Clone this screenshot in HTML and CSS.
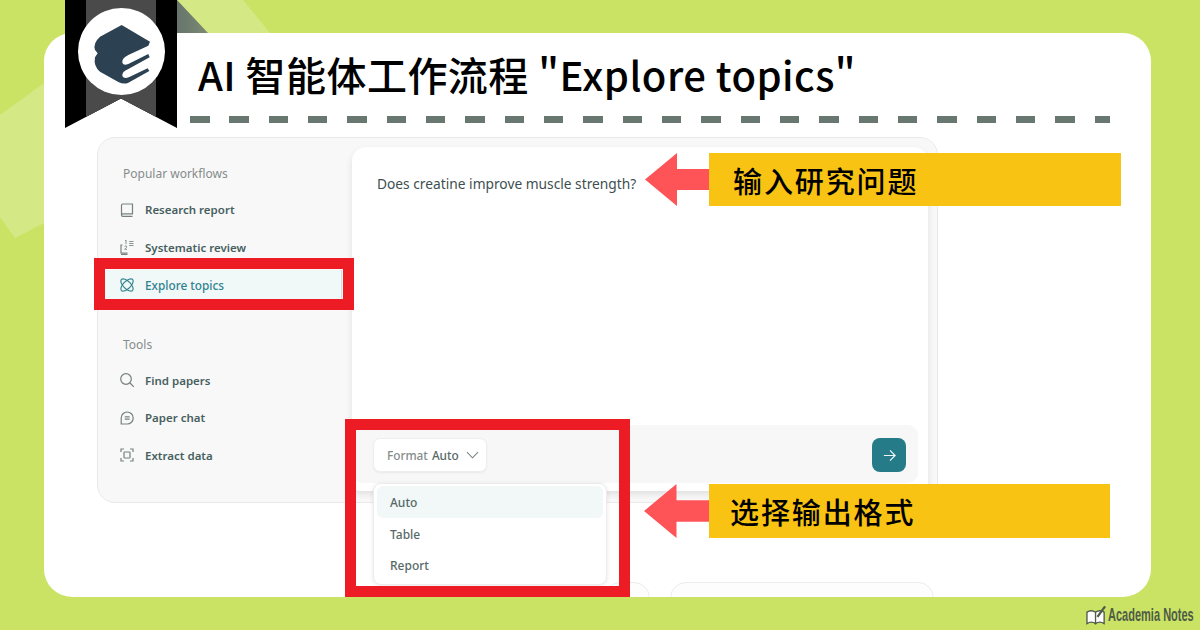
FILE: index.html
```html
<!DOCTYPE html>
<html lang="zh">
<head>
<meta charset="utf-8">
<title>AI 智能体工作流程</title>
<link rel="stylesheet" href="styles.css">
</head>
<body>
<div class="stage">
  <div class="band band-a"></div>
  <div class="band band-b"></div>
  <div class="fold"></div>
  <main class="card">
    <header class="head">
      <h1 class="title">AI 智能体工作流程 "Explore topics"</h1>
      <div class="dashes"></div>
    </header>
    <section class="app">
      <nav class="side">
        <div class="side-label">Popular workflows</div>
        <ul class="side-list">
          <li class="side-item"><svg class="ico" viewBox="0 0 16 16"><path d="M2.500 13V3.200A1.200 1.200 0 0 1 3.700 2H13.500v9.800H3.900A1.500 1.500 0 0 0 2.500 13a1.300 1.300 0 0 0 1.300 1.300H13.500"/></svg>Research report</li>
          <li class="side-item"><svg class="ico" viewBox="0 0 16 16"><path d="M3.500 6H2v8h6.500"/><path d="M2 15.300h6.500" stroke-width="1.600"/><path d="M6 1.800 7 1v4.200M5.600 7.800c.2-1.300 2.300-1.200 2.200.1 0 .8-1.600 1.500-2.200 2.400h2.400M10.200 2.500h4.300M10.200 4.500h4.300M10.200 6.500h4.300" stroke-width=".85"/></svg>Systematic review</li>
          <li class="side-item side-item-on"><svg class="ico" viewBox="0 0 16 16"><ellipse cx="8" cy="8" rx="3.700" ry="7.900" transform="rotate(45 8 8)"/><ellipse cx="8" cy="8" rx="3.700" ry="7.900" transform="rotate(-45 8 8)"/></svg>Explore topics</li>
        </ul>
        <div class="side-label side-label-tools">Tools</div>
        <ul class="side-list">
          <li class="side-item"><svg class="ico" viewBox="0 0 16 16"><circle cx="7" cy="7" r="5.300"/><path d="m11 11 3.800 3.800"/></svg>Find papers</li>
          <li class="side-item"><svg class="ico" viewBox="0 0 16 16"><path d="M8.200 2a6 6 0 1 1 0 12H2.200V8A6 6 0 0 1 8.200 2Z"/><path d="M5.800 6.800h4.800M5.800 9.200h4.800"/></svg>Paper chat</li>
          <li class="side-item"><svg class="ico" viewBox="0 0 16 16"><path d="M2 5V2h3M11 2h3v3M14 11v3h-3M5 14H2v-3"/><rect x="5" y="5" width="6" height="6" rx=".8"/></svg>Extract data</li>
        </ul>
      </nav>
      <div class="main">
        <p class="question">Does creatine improve muscle strength?</p>
        <div class="composer">
          <div class="format">
            <span class="format-key">Format</span>
            <span class="format-val">Auto</span>
            <svg class="chev" viewBox="0 0 14 8"><path d="m1 1 6 6 6-6"/></svg>
          </div>
          <button class="send"><svg viewBox="0 0 16 16"><path d="M2 8h12M8.500 2.500 14 8l-5.500 5.500"/></svg></button>
        </div>
      </div>
    </section>
    <ul class="menu">
      <li class="menu-item menu-item-on">Auto</li>
      <li class="menu-item">Table</li>
      <li class="menu-item">Report</li>
    </ul>
    <div class="stub stub-a"></div>
    <div class="stub stub-b"></div>
  </main>
  <div class="ribbon">
    <div class="ribbon-inner"></div>
    <div class="badge">
      <svg viewBox="234 24 261 261"><path d="M365 75 450 125 445 137 385 165Q365 175 367 188 370 198 385 192L445 162 449 172 385 207Q365 215 367 228 372 238 388 231L443 205 448 213 385 248Q372 254 355 246L300 215Q280 200 285 172L293 160 285 150Q278 130 300 110Z"/></svg>
    </div>
  </div>
  <div class="mark mark-side"></div>
  <div class="mark mark-format"></div>
  <div class="callout callout-a"><span class="arrow"></span><span class="callout-text">输入研究问题</span></div>
  <div class="callout callout-b"><span class="arrow"></span><span class="callout-text">选择输出格式</span></div>
  <div class="brand">
    <svg viewBox="0 0 22 20"><path d="M1 7c3-2 6-2 9 0v12c-3-2-6-2-9 0ZM10 7c3-2 6-2 9 0v12c-3-2-6-2-9 0Z" fill="#fff" stroke="#4e5a4a" stroke-width="1.400"/><path d="M12 12 20 1" stroke="#4e5a4a" stroke-width="2.400" fill="none"/></svg>
    <span class="brand-name">Academia Notes</span>
  </div>
</div>
</body>
</html>
```

FILE: styles.css
```css
* { box-sizing: border-box; }
html, body { margin: 0; padding: 0; }
body { width: 1200px; height: 630px; overflow: hidden; background: #cbe365; font-family: "Noto Sans", "Noto Sans CJK SC", sans-serif; }
ul { list-style: none; margin: 0; padding: 0; }

.stage { position: relative; width: 1200px; height: 630px; overflow: hidden; padding: 33px 49px 33px 44px; }
.band { position: absolute; background: #d4e885; }
.band-a { left: 177px; top: 0; width: 93px; height: 33px; clip-path: polygon(0 0, 66px 0, 93px 33px, 30px 33px); }
.band-b { left: 0; top: 80px; width: 44px; height: 170px; clip-path: polygon(0 35px, 44px 3px, 44px 143px, 15px 158px, 0 137px); }
.fold { position: absolute; left: 177px; top: 0; width: 31px; height: 33px; background: linear-gradient(90deg, #66746c, #7c8a72); clip-path: polygon(0 0, 100% 100%, 0 100%); }

.card { position: relative; height: 564px; background: #fff; border-radius: 28px; overflow: hidden; }
.head { padding: 16px 41px 0 146px; }
.title { margin: 0 0 0 8px; height: 50px; font: 500 40px/50px "Noto Sans CJK SC", sans-serif; letter-spacing: .45px; color: #000; white-space: nowrap; }
.dashes { height: 7px; margin-top: 17px; background: repeating-linear-gradient(90deg, #68776f 0 19.500px, transparent 19.500px 39.330px); }

.app { display: flex; position: relative; margin: 14px 0 0 53px; width: 841px; height: 366px; background: #f8f8f8; border: 1px solid #e9e9e9; border-radius: 18px; }
.side { width: 254px; padding: 28px 0 0 25px; flex: none; }
.side-label { font-size: 12px; line-height: 16px; color: #858c8c; }
.side-label-tools { margin-top: 37px; }
.side-list { margin-top: 9px; }
.side-item { display: flex; align-items: center; gap: 10px; height: 37.500px; margin-left: -4px; font-size: 11.500px; font-weight: 600; color: #47605f; white-space: nowrap; }
.side-item-on { color: #2f8290; font-size: 11.800px; font-weight: 500; background: #f1f8f8; border-right: 1px solid #d5dede; margin: 3.500px 0 0 -18px; padding-left: 14px; width: 237px; height: 30px; }
.ico { width: 16px; height: 16px; flex: none; fill: none; stroke: #75817f; stroke-width: 1.200; }
.side-item-on .ico { stroke: #2f8290; }

.main { position: relative; width: 576px; margin-top: 9px; height: 344px; background: #fff; border-radius: 14px 14px 8px 8px; box-shadow: 0 3px 7px rgba(0,0,0,.1); display: flex; flex-direction: column; }
.question { margin: 0; padding: 28px 25px 0; flex: 1; font-size: 13.750px; line-height: 18px; color: #3d4f4f; }
.composer { display: flex; align-items: center; justify-content: space-between; height: 58px; background: #f7f7f7; border-radius: 10px; padding: 2px 12px 0 21px; margin: 0 10px 8px 0; }
.format { display: flex; align-items: center; gap: 4px; height: 34px; width: 114px; padding-left: 13px; background: #fff; border: 1px solid #eeeeee; border-radius: 7px; box-shadow: 0 1px 2px rgba(0,0,0,.06); font-size: 11.800px; }
.format-key { color: #858c8c; font-weight: 500; }
.format-val { color: #566867; font-weight: 500; }
.chev { width: 13px; height: 8px; margin-left: 3px; fill: none; stroke: #75817f; stroke-width: 1.100; }
.send { width: 34px; height: 34px; padding: 0; border: 0; border-radius: 8px; background: #267b88; display: flex; align-items: center; justify-content: center; }
.send svg { width: 15px; height: 15px; fill: none; stroke: #eef6f6; stroke-width: 1.300; }

.menu { position: absolute; left: 329px; top: 450px; width: 234px; height: 102px; padding: 2px 3px; background: #fff; border: 1px solid #ececec; border-radius: 8px; box-shadow: 0 1px 5px rgba(0,0,0,.09); z-index: 1; }
.menu-item { height: 31.500px; padding-left: 13px; line-height: 34px; font-size: 12px; font-weight: 500; color: #566867; border-radius: 6px; }
.menu-item-on { background: #f1f8f7; }
.stub { position: absolute; top: 549px; height: 40px; border: 1px solid #ececec; border-radius: 16px; background: #fdfdfd; }
.stub-a { left: 560px; width: 46px; }
.stub-b { left: 626px; width: 264px; }

.ribbon { position: absolute; left: 65px; top: 0; width: 112px; height: 128px; background: #000; clip-path: polygon(0 0, 100% 0, 100% 100%, 50% 77%, 0 100%); }
.ribbon-inner { position: absolute; left: 21px; top: 0; width: 70px; height: 128px; background: #4a4a4a; }
.badge { position: absolute; left: 13px; top: 8px; width: 87px; height: 87px; border-radius: 50%; background: #fff; }
.badge svg { display: block; width: 87px; height: 87px; fill: #2c4152; }

.mark { position: absolute; border: 11px solid #ed1c24; z-index: 2; }
.mark-side { left: 94px; top: 258px; width: 260px; height: 52px; }
.mark-format { left: 345px; top: 419px; width: 285px; height: 178px; }

.callout { position: absolute; display: flex; align-items: stretch; z-index: 3; }
.callout-a { left: 645px; top: 153px; width: 476px; height: 53px; }
.callout-b { left: 644px; top: 484px; width: 466px; height: 54px; }
.arrow { width: 64px; flex: none; background: #fe5458; clip-path: polygon(0 50%, 50% 0, 50% 30%, 100% 30%, 100% 70%, 50% 70%, 50% 100%); }
.callout-b .arrow { width: 65px; }
.callout-text { flex: 1; background: #f8c312; font: 500 29px/54px "Noto Sans CJK SC", sans-serif; letter-spacing: 1.900px; padding-left: 24px; color: #000; white-space: nowrap; }
.callout-b .callout-text { padding-left: 21px; }

.brand { position: absolute; left: 1086px; top: 605px; display: flex; align-items: center; gap: 1px; width: 114px; overflow: hidden; font: 700 19px/20px "Liberation Sans", sans-serif; color: #4f5c47; white-space: nowrap; }
.brand svg { width: 21px; height: 20px; flex: none; }
.brand-name { display: inline-block; transform: scaleX(.58); transform-origin: left center; }
```
